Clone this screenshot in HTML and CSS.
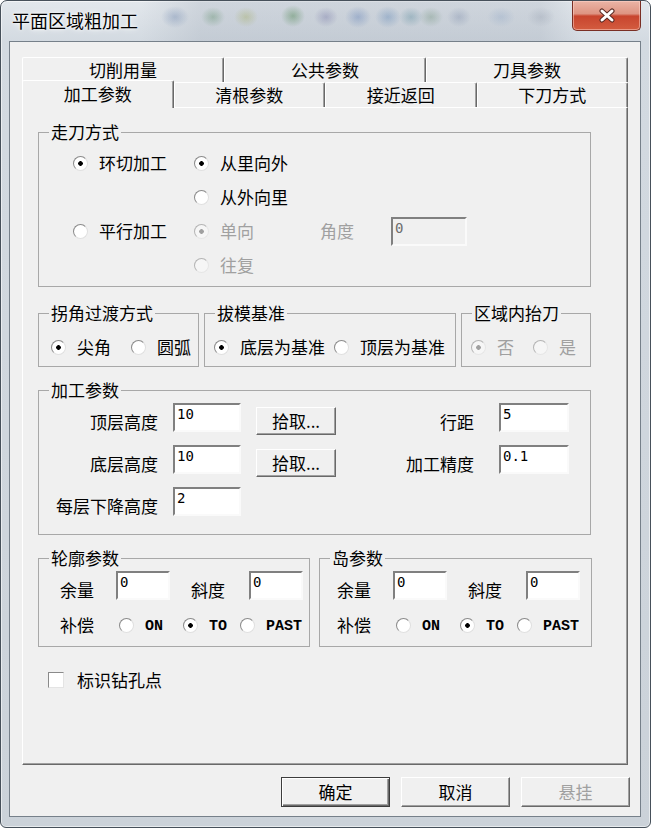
FILE: index.html
```html
<!DOCTYPE html>
<html lang="zh-CN">
<head>
  <meta charset="UTF-8">
  <title>平面区域粗加工</title>
  <link rel="stylesheet" href="styles.css">
</head>
<body>
  <div class="window">
    <div class="titlebar">
      <span class="title">平面区域粗加工</span>
      <button class="close" type="button" aria-label="关闭">
        <svg width="18" height="15" viewBox="0 0 18 15">
          <path d="M4 3 L14 12 M14 3 L4 12" stroke="#5b2b24" stroke-width="5" stroke-linecap="round"/>
          <path d="M4 3 L14 12 M14 3 L4 12" stroke="#fff" stroke-width="3" stroke-linecap="round"/>
        </svg>
      </button>
    </div>

    <div class="client">
      <div class="tabs">
        <div class="tab-row">
          <div class="tab">切削用量</div>
          <div class="tab">公共参数</div>
          <div class="tab">刀具参数</div>
        </div>
        <div class="tab-row">
          <div class="tab active">加工参数</div>
          <div class="tab">清根参数</div>
          <div class="tab">接近返回</div>
          <div class="tab">下刀方式</div>
        </div>

        <div class="page">
          <fieldset class="group mode">
            <legend>走刀方式</legend>
            <div class="mode-grid">
              <label class="radio on">环切加工</label>
              <label class="radio on">从里向外</label>
              <span></span><span></span>

              <span></span>
              <label class="radio">从外向里</label>
              <span></span><span></span>

              <label class="radio">平行加工</label>
              <label class="radio on disabled">单向</label>
              <span class="disabled">角度</span>
              <input class="field angle" value="0" disabled>

              <span></span>
              <label class="radio disabled">往复</label>
            </div>
          </fieldset>

          <div class="row-groups">
            <fieldset class="group corner">
              <legend>拐角过渡方式</legend>
              <div class="inline-body">
                <label class="radio on">尖角</label>
                <label class="radio">圆弧</label>
              </div>
            </fieldset>
            <fieldset class="group draft">
              <legend>拔模基准</legend>
              <div class="inline-body">
                <label class="radio on">底层为基准</label>
                <label class="radio">顶层为基准</label>
              </div>
            </fieldset>
            <fieldset class="group lift">
              <legend>区域内抬刀</legend>
              <div class="inline-body">
                <label class="radio on disabled">否</label>
                <label class="radio disabled">是</label>
              </div>
            </fieldset>
          </div>

          <fieldset class="group params">
            <legend>加工参数</legend>
            <div class="params-grid">
              <span class="label">顶层高度</span>
              <input class="field" value="10">
              <button class="btn pick" type="button">拾取...</button>
              <span class="label gap">行距</span>
              <input class="field wide" value="5">

              <span class="label">底层高度</span>
              <input class="field" value="10">
              <button class="btn pick" type="button">拾取...</button>
              <span class="label gap">加工精度</span>
              <input class="field wide" value="0.1">

              <span class="label">每层下降高度</span>
              <input class="field" value="2">
            </div>
          </fieldset>

          <div class="sides">
            <fieldset class="group side contour">
              <legend>轮廓参数</legend>
              <div class="side-body">
                <div class="side-fields">
                  <span class="label">余量</span>
                  <input class="field" value="0">
                  <span class="label">斜度</span>
                  <input class="field" value="0">
                </div>
                <div class="side-comp">
                  <span class="label">补偿</span>
                  <label class="radio w-on"><span class="mono">ON</span></label>
                  <label class="radio on w-to"><span class="mono">TO</span></label>
                  <label class="radio"><span class="mono">PAST</span></label>
                </div>
              </div>
            </fieldset>
            <fieldset class="group side island">
              <legend>岛参数</legend>
              <div class="side-body">
                <div class="side-fields">
                  <span class="label">余量</span>
                  <input class="field" value="0">
                  <span class="label">斜度</span>
                  <input class="field" value="0">
                </div>
                <div class="side-comp">
                  <span class="label">补偿</span>
                  <label class="radio w-on"><span class="mono">ON</span></label>
                  <label class="radio on w-to"><span class="mono">TO</span></label>
                  <label class="radio"><span class="mono">PAST</span></label>
                </div>
              </div>
            </fieldset>
          </div>

          <div class="check-row">
            <label class="check">标识钻孔点</label>
          </div>
        </div>
      </div>

      <div class="actions">
        <button class="btn default" type="button">确定</button>
        <button class="btn" type="button">取消</button>
        <button class="btn" type="button" disabled>悬挂</button>
      </div>
    </div>
  </div>
</body>
</html>
```

FILE: styles.css
```css
* {
  box-sizing: border-box;
}
body {
  margin: 0;
  font-family: "Noto Sans CJK SC", "Noto Sans", sans-serif;
  font-size: 17px;
  line-height: 20px;
  color: #000;
  background: #fff;
}

/* window frame */
.window {
  width: 651px;
  height: 828px;
  border: 1px solid #46505a;
  border-radius: 7px 7px 6px 6px;
  overflow: hidden;
  background: linear-gradient(180deg, #e2e7ec 0, #d3dae1 40px, #cbd2d9 100%);
  box-shadow: inset 0 0 0 1px rgba(255, 255, 255, .55);
}
.titlebar {
  display: flex;
  justify-content: space-between;
  align-items: flex-start;
  height: 40px;
  background-image:
    radial-gradient(14px 11px at 174px 16px, rgba(80, 110, 160, .3), transparent),
    radial-gradient(12px 10px at 212px 16px, rgba(60, 120, 70, .3), transparent),
    radial-gradient(12px 10px at 245px 16px, rgba(150, 160, 60, .3), transparent),
    radial-gradient(12px 11px at 292px 15px, rgba(40, 110, 40, .35), transparent),
    radial-gradient(12px 10px at 325px 16px, rgba(90, 90, 150, .3), transparent),
    radial-gradient(13px 11px at 357px 16px, rgba(60, 100, 170, .3), transparent),
    radial-gradient(13px 11px at 387px 16px, rgba(60, 110, 170, .3), transparent),
    radial-gradient(12px 10px at 410px 16px, rgba(60, 120, 140, .3), transparent),
    radial-gradient(12px 10px at 430px 16px, rgba(90, 130, 100, .3), transparent),
    radial-gradient(12px 10px at 458px 16px, rgba(90, 110, 150, .25), transparent),
    radial-gradient(14px 10px at 500px 16px, rgba(120, 150, 190, .25), transparent),
    radial-gradient(14px 10px at 540px 16px, rgba(130, 140, 160, .25), transparent),
    linear-gradient(90deg, transparent 140px, rgba(150, 160, 175, .25) 200px, rgba(150, 160, 175, .25) 540px, transparent 580px);
}
.title {
  margin: 9px 0 0 11px;
  font-size: 18px;
  text-shadow: 0 0 6px #fff, 0 0 3px #fff;
}
.close {
  display: flex;
  align-items: center;
  justify-content: center;
  width: 69px;
  height: 30px;
  margin-right: 9px;
  padding: 0;
  border: 1px solid #7a2f24;
  border-top: 0;
  border-radius: 0 0 5px 5px;
  background: linear-gradient(180deg, #eab4a6 0, #de9482 44%, #c8452e 52%, #d35c3f 100%);
  box-shadow: inset 0 0 0 1px rgba(255, 215, 205, .5);
}

.client {
  height: 776px;
  margin: 0 9px 0 8px;
  padding: 15px 10px 0 12px;
  border: 1px solid #76808a;
  background: #f0f0f0;
}

/* tab control */
.tabs {
  width: 606px;
}
.tab-row {
  display: flex;
  height: 25px;
}
.tab {
  flex: 1;
  height: 25px;
  border: 1px solid;
  border-bottom: 0;
  border-color: #fff #696969 transparent #fff;
  border-radius: 2px 2px 0 0;
  box-shadow: inset -1px 0 0 #a0a0a0;
  text-align: center;
  line-height: 23px;
}
.tab.active {
  position: relative;
  z-index: 1;
  height: 28px;
  margin-top: -2px;
  background: #f0f0f0;
  line-height: 25px;
}
.page {
  height: 658px;
  padding: 14px 0 0 15px;
  border: 1px solid;
  border-color: #fff #696969 #696969 #fff;
  box-shadow: inset -1px -1px 0 #a0a0a0;
}

/* group boxes */
.group {
  margin: 0;
  padding: 0;
  min-width: 0;
  border: 1px solid #a8a8a8;
}
.group legend {
  margin-left: 10px;
  padding: 0 2px;
  line-height: 20px;
}
.mode {
  width: 553px;
}
.mode-grid {
  display: grid;
  grid-template-columns: 121px 126px 71px 76px;
  grid-auto-rows: 34px;
  align-items: center;
  padding: 4px 0 4px 34px;
}
.field.angle {
  width: 76px;
}

.row-groups {
  display: flex;
  gap: 5px;
  margin-top: 16px;
}
.corner { width: 161px; }
.draft { width: 252px; }
.lift { width: 130px; }
.inline-body {
  display: flex;
  align-items: center;
  height: 43px;
  padding: 12px 0 7px 12px;
  gap: 20px;
}
.draft .inline-body {
  padding-left: 9px;
  gap: 9px;
}
.lift .inline-body {
  padding-left: 9px;
  gap: 19px;
}

.params {
  width: 553px;
  margin-top: 13px;
}
.params-grid {
  display: grid;
  grid-template-columns: 119px 68px 80px 133px 70px;
  grid-auto-rows: 29px;
  column-gap: 15px;
  row-gap: 13px;
  padding: 3px 0 18px;
}
.params-grid .label {
  justify-self: end;
  align-self: end;
}
.params-grid .label.gap {
  margin-right: 10px;
}
.btn.pick {
  align-self: end;
  height: 28px;
  margin-bottom: -3px;
}

.sides {
  display: flex;
  gap: 9px;
  margin-top: 13px;
}
.contour { width: 272px; }
.island { width: 273px; }
.side-body {
  padding: 3px 0 8px 21px;
}
.island .side-body {
  padding-left: 17px;
}
.side-fields {
  display: grid;
  grid-template-columns: 35px 54px 37px 54px;
  column-gap: 21px;
  height: 29px;
}
.side-fields .label {
  align-self: end;
}
.side-comp {
  display: flex;
  align-items: center;
  height: 26px;
  margin-top: 12px;
}
.side-comp .label {
  width: 35px;
  margin-right: 24px;
}
.w-on { width: 64px; }
.w-to { width: 57px; }

.check-row {
  margin: 23px 0 0 10px;
  height: 20px;
}

/* controls */
.radio, .check {
  display: inline-flex;
  align-items: center;
  gap: 11px;
  white-space: nowrap;
}
.radio::before {
  content: "";
  flex: none;
  width: 13px;
  height: 13px;
  border: 1px solid;
  border-color: #8a8a8a #e0e0e0 #e0e0e0 #8a8a8a;
  border-radius: 50%;
  background: #fff;
}
.radio.on::before {
  background: radial-gradient(circle, #000 0 2px, #fff 2.6px);
}
.radio.disabled::before {
  border-color: #b4b4b4 #e6e6e6 #e6e6e6 #b4b4b4;
  background: #f6f6f6;
}
.radio.on.disabled::before {
  background: radial-gradient(circle, #a0a0a0 0 2px, #f6f6f6 2.6px);
}
.disabled {
  color: #a0a0a0;
}
.mono {
  margin-top: 4px;
  font-family: "Liberation Mono", monospace;
  font-size: 15px;
  font-weight: bold;
}
.check::before {
  content: "";
  flex: none;
  width: 14px;
  height: 14px;
  margin-right: 2px;
  border: 1px solid;
  border-color: #8a8a8a #e4e4e4 #e4e4e4 #8a8a8a;
  background: #fff;
}

.field {
  width: 100%;
  height: 29px;
  margin: 0;
  padding: 1px 2px 8px;
  border: 2px solid;
  border-color: #808080 #fafafa #fafafa #808080;
  background: #fff;
  font-family: "DejaVu Sans Mono", monospace;
  font-size: 14px;
  line-height: 16px;
  color: #000;
}
.field:disabled {
  background: #f0f0f0;
  color: #6d6d6d;
}

.btn {
  width: 109px;
  height: 30px;
  padding: 0;
  border: 1px solid;
  border-color: #fff #696969 #696969 #fff;
  box-shadow: inset -1px -1px 0 #a0a0a0;
  background: #f0f0f0;
  font: inherit;
  color: #000;
}
.btn.pick {
  width: 80px;
}
.btn.default {
  border-color: #3c3c3c;
  box-shadow: inset 1px 1px 0 #fff, inset -1px -1px 0 #696969, inset -2px -2px 0 #a0a0a0;
}
.btn:disabled {
  color: #a0a0a0;
}
.actions {
  display: flex;
  justify-content: flex-end;
  gap: 11px;
  margin-top: 12px;
}
```
